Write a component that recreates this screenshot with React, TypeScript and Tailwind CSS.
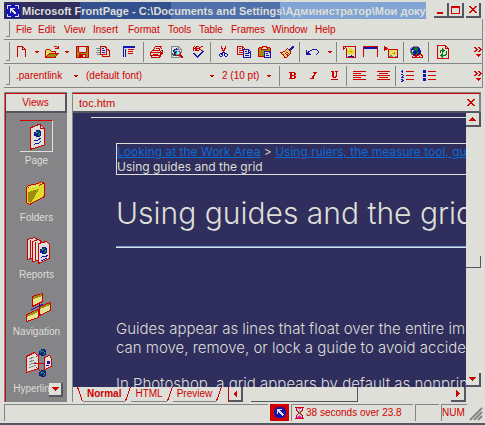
import type { ReactNode } from 'react';

const UI = 'font-["Liberation_Sans","Noto_Sans",sans-serif]';

const PALETTE: Record<string, string> = {
  r: '#d00000',
  b: '#1414b0',
  w: '#dddfd8',
  y: '#dede2a',
  Y: '#e4e490',
  o: '#a08a10',
  g: '#858587',
  n: '#0c7a1c',
  k: '#302e5d',
  c: '#1fd0dc',
  m: '#e020d0',
};

function Sprite({ rows }: { rows: string[] }) {
  const width = Math.max(...rows.map((row) => row.length));
  const cells: ReactNode[] = [];
  rows.forEach((row, y) => {
    let x = 0;
    while (x < row.length) {
      let end = x + 1;
      while (end < row.length && row[end] === row[x]) end++;
      if (PALETTE[row[x]]) {
        cells.push(<rect key={`${x}-${y}`} x={x} y={y} width={end - x} height={1} fill={PALETTE[row[x]]} />);
      }
      x = end;
    }
  });
  return (
    <svg width={width} height={rows.length} viewBox={`0 0 ${width} ${rows.length}`} shapeRendering="crispEdges" className="block shrink-0" aria-hidden="true">
      {cells}
    </svg>
  );
}

const S = {
  app: ['wwww....wwww', 'w..........w', 'w..........w', 'w..wwwww...w', '...www......', '...wwww.....', '...w.www....', '...w..www...', '.......ww...', 'w..........w', 'w..........w', 'wwww....wwww'],
  appSmall: ['...bbbbbb...', '.bbbbbbbbbb.', '.bbwwwwwbbb.', 'bbbwwwbbbbbb', 'bbbwwwwbbbbb', 'bbbwbwwwbbbb', 'bbbwbbwwwbbb', 'bbbbbbbwwwbb', '.bbbbbbbwbb.', '.bbbbbbbbbb.', '...bbbbbb...'],
  arrow: ['rrrr', '.rr.'],
  blank: ['rrrrrr...', 'r....rr..', 'r....r.r.', 'r....rrrr', 'r.......r', 'r.......r', 'r.......r', 'r.......r', 'r.......r', 'r.......r', 'r.......r'],
  open: ['.........rrr.r', '............rr', '..........rrrr', '.rrrr.........', 'rYyYyr........', 'ryYyYyrrrrr...', 'rYyYyYyYyYr...', 'ryYyrrrrrrrrrr', 'rYyroooooooor.', 'ryroooooooor..', 'rroooooooor...', 'rrrrrrrrrrr...'],
  save: ['rrrrrrrrrrrrr', 'ror.......ror', 'ror.......ror', 'ror.......ror', 'ror.......ror', 'ror.......ror', 'roorrrrrrroor', 'rooooooooooor', 'roorrrrrrroor', 'roorrrrwwroor', 'roorrrrwwroor', 'rrrrrrrrrrrrr'],
  publish: ['....rrrrrr....', '....rwwwwrr...', 'ggggrwbbwwr...', '....rwwwwwrrr.', '.gggrwbbbwr.rr', '....rwwwwwr..r', 'ggggrwbbbwr..r', '....rwwwwwr..r', '.gggrrrrrrr..r', '......r......r', '......rrrrrrrr'],
  folders: ['bbbbbbbbbbbb', 'bbbbbbbbbbbb', 'b...........', 'b.b..rrrrrr.', 'b.b.........', 'b.b..rrrrr..', 'b.b.........', 'b.b..rrrrr..', 'b.b.........', 'b.b.........', 'b.b.........'],
  print: ['.....rrrrrrr.', '....r.....r..', '....r.rrrr.r.', '...r.....r...', '..rrrrrrrr.rr', '.r........r.r', 'rrrrrrrrrrrrr', 'r.........rrr', 'r..rrrrr..rr.', 'rrrrrrrrrrr..', '.r.......rr..', '.rrrrrrrrr...'],
  preview: ['gggggggg....', 'gwwwwwwgg...', 'gwwwwbwgwg..', 'gwwbbbbgggg.', 'gwbnwwwwwwg.', 'gwbnnbccrwg.', 'gwwbbcwwcrg.', 'gnwbrcwwcr..', 'gnnbrcccrr..', 'gwnnbrrrrrr.', 'gwwwwwwwgrrr', 'ggggggggg.rr'],
  spell: ['..r.rrr..rr.', '.r.rr..rr...', '.rrrrrrr....', '.r.rr..rr...', '.r.rrrr..rr.', '..........bb', '.........bb.', '.bb.....bb..', '..bb...bb...', '...bb.bb....', '....bbb.....', '.....b......'],
  cut: ['..r...r..', '..r...r..', '..rr.rr..', '...r.r...', '...rrr...', '....r....', '...bbb...', '.bbb.bbb.', 'b.bb.b..b', 'b..b.b..b', '.bb...bb.'],
  copy: ['rrrrrr........', 'r....rr.......', 'r.rr.r.r......', 'r....rbbbbbb..', 'r.rrrrb....bb.', 'r.....b.bb.b.b', 'r.rrrrb....bbb', 'r.....b.bbbb.b', 'rrrrrrb......b', '......b.bbbb.b', '......b......b', '......bbbbbbbb'],
  paste: ['....rrrrr....', '.rrrrywyrrrr.', 'roorwwwwwroor', 'roorrrrrrroor', 'rooooooooooor', 'rooooobbbbbbr', 'rooooobwwwwbb', 'rooooobwbbwwb', 'rooooobwwwwwb', 'rooooobwbbbwb', 'rrrrrrbwwwwwb', '......bbbbbbb'],
  brush: ['............bb', '...........bbb', '.......r..bbb.', '......rYrbbb..', '.....rYyYbr...', '...rrYyYyYr...', 'rrrYyYrrYyr...', '.rYyYr..rYr...', '..rrYyrrYr....', '...rYyYrr.....', '....rYYr......', '.y.yrrr.......'],
  undo: ['......bbbbb..', 'b...bb.....b.', 'b.bb........b', 'bbb.........b', 'bbbb.......b.', 'bbbbb.....b..'],
  web: ['rrrrrrrrrrrrr', 'r.rwwwwwwwwwr', 'rr.rwwyyywwwr', 'r..rwwyyywwwr', '...ryyyyyyywr', '...ryyyooyyyr', '...ryyyyyyywr', '...rwyyyyyywr', '...rwwyywwwwr', '...rwwwwbwwwr', '...rwbbbbbbwr', '...rrrrrrrrrr'],
  table: ['rrrrrrrrrrrrrrr', 'rbbbbbbbbbbbbbr', 'rbbbbbbbbbbbbbr', 'r.............r', 'r.............r', 'r.............r', 'r.............r', 'r.............r', 'r.............r', 'r.............r', 'r.............r'],
  picture: ['r.............', 'rrr...........', 'rrrr..........', 'rrr.rrrrrrrrrr', 'r...ryyYyYYyYr', '....rYyyYyyYyr', '....ryYYyYoYYr', '....rYyYyooyYr', '....ryYyYyYyYr', '....rwggwYwwwr', '....rggggwwggr', '....rrrrrrrrrr'],
  link: ['....ggggg.....', '..ggbbnnbb....', '.ggbbnnnnbb...', '.gbbbnnnnbb...', '.gbwwbnnbbbb..', '.gnwbbbbnbbb..', '.gnnbbbbnnbb..', '..gnnbbnnbbr..', '..ggbbbnbrrrr.', '....rrrrrr..rr', '...r..rr..r..r', '...rrrrrrrrrrr'],
  refresh: ['rrrrrrrrr...', 'r.......rr..', 'r.......r.r.', 'r....n..rrrr', 'r....nn....r', 'r..nnnnn...r', 'r..n.nn..n.r', 'r..n.n...n.r', 'r....n...n.r', 'r...nn..nn.r', 'r..nnnnnn..r', 'r...nn.....r', 'r....n.....r', 'rrrrrrrrrrrr'],
  more: ['rr..rr..', '.rr..rr.', '..rr..rr', '.rr..rr.', 'rr..rr..', '........', '........', '..rrrrr.', '...rrr..', '....r...'],
  bold: ['rrrrrr.', '.rr..rr', '.rr..rr', '.rrrrr.', '.rr..rr', '.rr..rr', 'rrrrrr.'],
  italic: ['...rrrr', '....rr.', '....r..', '...rr..', '..rr...', '..rr...', 'rrrr...'],
  underline: ['rrr.rrr', '.rr..r.', '.rr..r.', '.rr..r.', '.rr..r.', '.rr.rr.', '..rrr..', '.......', 'rrrrrrr'],
  left: ['rrrrrrrrrrrrr', '.............', 'rrrrrrrr.....', '.............', 'rrrrrrrrrrrrr', '.............', 'rrrrrrrr.....', '.............', 'rrrrrrrrrrrrr'],
  center: ['rrrrrrrrrrrrr', '.............', '..rrrrrrrrr..', '.............', 'rrrrrrrrrrrrr', '.............', '..rrrrrrrrr..', '.............', 'rrrrrrrrrrrrr'],
  numbers: ['.b...........', 'bb...rrrrrrrr', '.b...........', '.............', 'bb...........', '..b..rrrrrrrr', '.b...........', 'bbb..........', '.............', 'bb...rrrrrrrr', '.bb..........', 'bb...........'],
  bullets: ['bbb..........', 'bbb..rrrrrrrr', 'bbb..........', '.............', 'bbb..........', 'bbb..rrrrrrrr', 'bbb..........', '.............', 'bbb..........', 'bbb..rrrrrrrr', 'bbb..........'],
  min: ['.......', '.......', '.......', '.......', '.......', '.......', 'rrrrrr.', 'rrrrrr.'],
  max: ['rrrrrrrrr', 'rrrrrrrrr', 'r.......r', 'r.......r', 'r.......r', 'r.......r', 'r.......r', 'rrrrrrrrr'],
  close: ['rr....rr', '.rr..rr.', '..rrrr..', '...rr...', '..rrrr..', '.rr..rr.', 'rr....rr'],
  up: ['...r...', '..rrr..', '.rrrrr.', 'rrrrrrr'],
  down: ['rrrrrrr', '.rrrrr.', '..rrr..', '...r...'],
  prev: ['..r', '.rr', 'rrr', 'rrr', '.rr', '..r'],
  next: ['r...', 'rr..', 'rrr.', 'rrrr', 'rrr.', 'rr..', 'r...'],
  glass: ['rrrrrrrrr', '.rwmmmwr.', '.rwwwwwr.', '.rgwgwgr.', '..rgwgr..', '...rgr...', '...rgr...', '..rwwgr..', '.rwwgwgr.', '.rwmmmwr.', '.rmmmmmr.', 'rrrrrrrrr'],
};

type Tool = { label: string; rows: string[]; size: string; line?: boolean };

const TOOLS: Tool[] = [
  { label: 'New page', rows: S.blank, size: 'w-[19px]' },
  { label: 'New page options', rows: S.arrow, size: 'w-[12px]' },
  { label: 'Open', rows: S.open, size: 'w-[18px]' },
  { label: 'Open options', rows: S.arrow, size: 'w-[12px]' },
  { label: 'Save', rows: S.save, size: 'w-[18px]' },
  { label: 'Publish web', rows: S.publish, size: 'w-[24px]' },
  { label: 'Folder list', rows: S.folders, size: 'w-[28px]', line: true },
  { label: 'Print', rows: S.print, size: 'w-[24px]' },
  { label: 'Preview in browser', rows: S.preview, size: 'w-[18px]' },
  { label: 'Spelling', rows: S.spell, size: 'w-[24px]', line: true },
  { label: 'Cut', rows: S.cut, size: 'w-[24px]' },
  { label: 'Copy', rows: S.copy, size: 'w-[18px]' },
  { label: 'Paste', rows: S.paste, size: 'w-[22px]' },
  { label: 'Format painter', rows: S.brush, size: 'w-[24px]', line: true },
  { label: 'Undo', rows: S.undo, size: 'w-[24px]' },
  { label: 'Undo options', rows: S.arrow, size: 'w-[12px]', line: true },
  { label: 'Web component', rows: S.web, size: 'w-[24px]' },
  { label: 'Insert table', rows: S.table, size: 'w-[18px]' },
  { label: 'Insert picture', rows: S.picture, size: 'w-[24px]', line: true },
  { label: 'Hyperlink', rows: S.link, size: 'w-[24px]', line: true },
  { label: 'Refresh', rows: S.refresh, size: 'w-[28px]' },
];

const FORMATS: Tool[] = [
  { label: 'Bold', rows: S.bold, size: 'w-[24px]' },
  { label: 'Italic', rows: S.italic, size: 'w-[18px]' },
  { label: 'Underline', rows: S.underline, size: 'w-[24px]', line: true },
  { label: 'Align left', rows: S.left, size: 'w-[24px]' },
  { label: 'Center', rows: S.center, size: 'w-[24px]', line: true },
  { label: 'Numbering', rows: S.numbers, size: 'w-[22px]' },
  { label: 'Bullets', rows: S.bullets, size: 'w-[22px]' },
];

const MENU = [
  ['File', 'w-[22px]'],
  ['Edit', 'w-[26px]'],
  ['View', 'w-[29px]'],
  ['Insert', 'w-[35px]'],
  ['Format', 'w-[40px]'],
  ['Tools', 'w-[31px]'],
  ['Table', 'w-[32px]'],
  ['Frames', 'w-[41px]'],
  ['Window', 'w-[43px]'],
  ['Help', 'w-[24px]'],
];

function Grip() {
  return <div className="mx-0.5 my-0.5 w-1 shrink-0 self-stretch border-r border-b border-[#858587]" />;
}

function ToolButton({ tool }: { tool: Tool }) {
  return (
    <>
      <button type="button" aria-label={tool.label} className={`flex h-5 shrink-0 items-center justify-center ${tool.size}`}>
        <Sprite rows={tool.rows} />
      </button>
      {tool.line && <div className="h-5 w-px shrink-0 bg-[#858587]" />}
    </>
  );
}

function Combo({ label, value, size }: { label: string; value: string; size: string }) {
  return (
    <div className={`grid shrink-0 items-center ${size}`}>
      <select aria-label={label} className="col-start-1 row-start-1 w-full appearance-none bg-transparent pl-1 outline-none">
        <option>{value}</option>
      </select>
      <span className="pointer-events-none col-start-1 row-start-1 mr-1 justify-self-end">
        <Sprite rows={S.arrow} />
      </span>
    </div>
  );
}

function Bevel({ label, rows, size }: { label: string; rows: string[]; size: string }) {
  return (
    <button type="button" aria-label={label} className={`flex shrink-0 items-center justify-center border-r-2 border-b-2 border-[#55565f] bg-[#dddfd8] ${size}`}>
      <Sprite rows={rows} />
    </button>
  );
}

function Globe({ x, y }: { x: number; y: number }) {
  return (
    <g transform={`translate(${x} ${y})`}>
      <path fill="#1414a0" d="M2 0h4v1h1v5h-1v1h-4v-1h-2v-4h2z" />
      <path fill="#0c7a1c" d="M3 1h2v2h-2zM1 3h2v1h-2zM4 4h2v2h-2z" />
      <path fill="#1fb0dc" d="M2 2h1v1h-1zM5 3h1v1h-1z" />
    </g>
  );
}

const pageArt = (
  <>
    <path d="M10 8L20 4L24 8V25L10 29.5Z" fill="#dddfd8" stroke="#d00000" />
    <path d="M20 4V8H24" fill="none" stroke="#d00000" />
    <Globe x={14} y={10} />
    <path d="M14 21L16 20L18 20L21 18M14 25L16 23L18 24L21 21" fill="none" stroke="#1414b0" />
  </>
);

const folderArt = (
  <>
    <path d="M5.500 10.500L7.500 8.500L17.500 6.500L20.500 4.500L23.500 6.500V19.500L8.500 27.500L5.500 25.500Z" fill="#dede2a" stroke="#d00000" />
    <path d="M7 15L18 12L10 26L7 25Z" fill="#a08a10" />
    <path d="M7 11L19 8L23 6" fill="none" stroke="#d00000" />
    <path d="M8 10.500L18 8.500" stroke="#e4e490" />
  </>
);

const reportsArt = (
  <>
    <path d="M6.500 5.500L13.500 3.500L17.500 6.500V22.500L6.500 25.500Z" fill="#dddfd8" stroke="#d00000" />
    <path d="M11.500 7.500L17.500 5.500L21.500 8.500V25.500L11.500 27.500Z" fill="#dddfd8" stroke="#d00000" />
    <path d="M14.500 8V27M9.500 6V25" stroke="#d00000" />
    <path d="M17.500 9.500L25.500 7.500L28.500 10.500V24.500L17.500 29.500Z" fill="#dddfd8" stroke="#d00000" />
    <Globe x={19} y={13} />
    <path d="M20 24L22 22L24 23L27 21M20 27L26 24" fill="none" stroke="#1414b0" />
  </>
);

const navArt = (
  <>
    <path d="M10 19L22 13M18 12V19" stroke="#1414b0" />
    <path d="M11.500 5.500L21.500 2.500V10.500L11.500 15.500Z" fill="#e4e490" stroke="#d00000" />
    <path d="M18.500 15.500L29.500 11.500V19.500L18.500 24.500Z" fill="#e4e490" stroke="#d00000" />
    <path d="M5.500 23.500L17.500 18.500V26.500L5.500 30.500Z" fill="#e4e490" stroke="#d00000" />
    <path d="M12 7L21 4M19 17L29 13M6 25L17 20" stroke="#a08a10" strokeWidth="2" />
  </>
);

const hyperArt = (
  <>
    <path d="M5.500 8.500L13.500 4.500L17.500 8.500V20.500L5.500 24.500Z" fill="#dddfd8" stroke="#d00000" />
    <path d="M8 11L13 9M8 14L13 12M8 17L15 14M8 20L15 17" stroke="#858587" />
    <path d="M23.500 9.500L28.500 7.500L30.500 10.500V18.500L23.500 21.500Z" fill="#dddfd8" stroke="#d00000" />
    <path d="M13 15.500H23M15 9L20 5M15 19L20 24" stroke="#d00000" />
    <path d="M26 13h3v3h-3zM25 17h3v1h-3z" fill="#1414b0" />
    <Globe x={18} y={1} />
    <Globe x={18} y={22} />
  </>
);

const VIEWS = [
  { name: 'Page', art: pageArt, on: true },
  { name: 'Folders', art: folderArt },
  { name: 'Reports', art: reportsArt },
  { name: 'Navigation', art: navArt },
  { name: 'Hyperlinks', art: hyperArt },
];

function ViewsPanel() {
  return (
    <aside className="flex w-[63px] shrink-0 flex-col border-t border-l border-[#858587]">
      <h2 className="flex h-5 shrink-0 items-center justify-center border-t border-l border-r-2 border-b-2 border-t-[#d00000] border-l-[#d00000] border-r-[#55565f] border-b-[#55565f]">Views</h2>
      <nav className="relative min-h-0 flex-1 overflow-hidden border-l border-[#d00000] bg-[#858587] text-[#dddfd8]">
        <ul className="flex flex-col gap-[7px] pt-[7px]">
          {VIEWS.map((view) => (
            <li key={view.name}>
              <button type="button" className="flex w-full flex-col items-center">
                <span className={view.on ? 'border-t border-r border-b border-t-[#d00000] border-r-[#dddfd8] border-b-[#dddfd8]' : 'border border-transparent'}>
                  <svg width="32" height="30" viewBox="0 1 32 30" shapeRendering="crispEdges" className="block" aria-hidden="true">
                    {view.art}
                  </svg>
                </span>
                <span className="leading-[18px]">{view.name}</span>
              </button>
            </li>
          ))}
        </ul>
        <div className="absolute right-[4px] bottom-[5px]">
          <Bevel label="Scroll views down" rows={S.down} size="h-[14px] w-[14px]" />
        </div>
      </nav>
    </aside>
  );
}

function Tab({ name, active }: { name: string; active?: boolean }) {
  return (
    <button type="button" role="tab" aria-selected={!!active} className="flex h-full shrink-0 items-stretch">
      {active && (
        <svg width="6" height="15" viewBox="0 0 6 15" shapeRendering="crispEdges" aria-hidden="true">
          <path d="M0.500 0L5.500 14" stroke="#d00000" />
        </svg>
      )}
      <span className={`flex items-center border-b border-[#858587] px-1 ${active ? 'font-bold' : ''}`}>{name}</span>
      <svg width="6" height="15" viewBox="0 0 6 15" shapeRendering="crispEdges" aria-hidden="true">
        <path d="M5.500 0L0.500 14" stroke="#d00000" />
      </svg>
    </button>
  );
}

function Editor() {
  return (
    <main className="flex min-w-0 flex-1 flex-col border-t border-l border-[#858587]">
      <div className="flex h-5 shrink-0 items-center justify-between border-t border-r-2 border-b-2 border-t-[#d00000] border-r-[#858587] border-b-[#55565f] pr-1 pl-1.5">
        <span className="text-[11px]">toc.htm</span>
        <button type="button" aria-label="Close page">
          <Sprite rows={S.close} />
        </button>
      </div>
      <div className="flex min-h-0 flex-1">
        <article className='min-w-0 flex-1 overflow-hidden bg-[#302e5d] pt-1 pl-[18px] font-["Inter","Noto_Sans",sans-serif] text-[15px] leading-[19px] font-light whitespace-nowrap text-[#dddfd8]'>
          <div className="border-t border-[#dddfd8] pt-[25px] pl-[25px]">
            <p className="border-y border-l border-[#dddfd8] text-[12px] leading-[15px] font-normal">
              <a href="#work-area" className="text-[#0b6ad4] underline">Looking at the Work Area</a>
              {' > '}
              <a href="#rulers" className="text-[#0b6ad4] underline">Using rulers, the measure tool, guides</a>
              <br />
              Using guides and the grid
            </p>
            <h1 className="mt-5 text-[30px] leading-[36px] font-light">Using guides and the grid</h1>
            <hr className="mt-[15px] h-0.5 border-t border-b border-t-[#6fa3dd] border-b-[#dddfd8]" />
            <p className="mt-[71px]">
              Guides appear as lines that float over the entire im
              <br />
              can move, remove, or lock a guide to avoid accide
            </p>
            <p className="mt-[17px]">In Photoshop, a grid appears by default as nonprin</p>
          </div>
        </article>
        <div className="flex w-[15px] shrink-0 flex-col">
          <Bevel label="Scroll up" rows={S.up} size="h-[14px] w-[15px]" />
          <div className="mt-[129px] h-3 border-r border-b border-[#55565f]" />
          <div className="mt-auto">
            <Bevel label="Scroll down" rows={S.down} size="h-[14px] w-[15px]" />
          </div>
        </div>
      </div>
      <div className="flex h-[15px] shrink-0 pr-[15px]">
        <div role="tablist" className="flex pl-1">
          <Tab name="Normal" active />
          <Tab name="HTML" />
          <Tab name="Preview" />
        </div>
        <div className="ml-1.5 flex min-w-0 flex-1 border-l border-[#d00000]">
          <Bevel label="Scroll left" rows={S.prev} size="h-[15px] w-[14px]" />
          <div className="ml-2 h-[15px] w-[45%] border-r border-b border-[#55565f]" />
          <div className="ml-auto">
            <Bevel label="Scroll right" rows={S.next} size="h-[15px] w-[15px]" />
          </div>
        </div>
      </div>
    </main>
  );
}

export default function App() {
  return (
    <div className={`flex h-screen min-h-[425px] flex-col overflow-hidden border-b-2 border-[#55565f] bg-[#dddfd8] pt-0.5 pl-1 text-[10px] leading-[14px] text-[#d00000] ${UI}`}>
      <header className="flex h-[17px] shrink-0 items-center justify-between pr-1">
        <h1 className="flex h-full items-center gap-0.5 overflow-hidden bg-[linear-gradient(90deg,#302e5d_0_76px,#33508f_76px_167px,#4f70aa_167px_276px,#80a4d3_276px)] pl-0.5 text-[11px] font-bold whitespace-nowrap text-[#dddfd8]">
          <span className="bg-[#1414b0] p-px">
            <Sprite rows={S.app} />
          </span>
          Microsoft FrontPage - C:\Documents and Settings\Администратор\Мои доку
        </h1>
        <div className="flex">
          <Bevel label="Minimize" rows={S.min} size="h-[15px] w-[15px]" />
          <Bevel label="Maximize" rows={S.max} size="h-[15px] w-[15px]" />
          <div className="w-0.5" />
          <Bevel label="Close" rows={S.close} size="h-[15px] w-[15px]" />
        </div>
      </header>

      <div className="mr-0.5 shrink-0 border-r border-[#858587]">
        <nav className="flex h-[21px] items-center border-b border-[#858587]" aria-label="Menu">
          <Grip />
          <div className="flex pt-0.5 pl-1">
            {MENU.map(([name, size]) => (
              <button key={name} type="button" className={`shrink-0 text-left ${size}`}>
                {name}
              </button>
            ))}
          </div>
        </nav>
        <div className="flex h-6 items-center border-b border-[#858587]">
          <Grip />
          {TOOLS.map((tool) => (
            <ToolButton key={tool.label} tool={tool} />
          ))}
          <button type="button" aria-label="More buttons" className="ml-auto">
            <Sprite rows={S.more} />
          </button>
        </div>
        <div className="flex h-6 items-center border-b border-[#858587]">
          <Grip />
          <Combo label="Style" value=".parentlink" size="w-[70px]" />
          <Combo label="Font" value="(default font)" size="w-[136px]" />
          <Combo label="Font size" value="2 (10 pt)" size="w-[57px]" />
          <div className="ml-1 h-5 w-px bg-[#858587]" />
          {FORMATS.map((tool) => (
            <ToolButton key={tool.label} tool={tool} />
          ))}
          <button type="button" aria-label="More formatting" className="ml-auto">
            <Sprite rows={S.more} />
          </button>
        </div>
      </div>

      <div className="mt-1 mr-1 flex min-h-0 flex-1 gap-[5px]">
        <ViewsPanel />
        <Editor />
      </div>

      <footer className="mt-0.5 flex h-[17px] shrink-0 gap-0.5 pr-0.5">
        <div className="flex-1 border-t border-l border-[#858587]" />
        <div className="flex w-[19px] items-center justify-center bg-[#d00000]">
          <Sprite rows={S.appSmall} />
        </div>
        <div className="flex w-[122px] items-center gap-0.5 border-t border-l border-[#858587] pl-[3px] whitespace-nowrap">
          <Sprite rows={S.glass} />
          38 seconds over 23.8
        </div>
        <div className="w-6 border-t border-l border-[#858587]" />
        <div className="flex w-[26px] items-center border-t border-l border-[#858587]">NUM</div>
        <svg width="14" height="14" viewBox="0 0 14 14" className="self-end" aria-hidden="true">
          <path d="M1 13L13 1M5 13L13 5M9 13L13 9" stroke="#858587" strokeWidth="2" />
        </svg>
      </footer>
      <div className="h-0.5 shrink-0" />
    </div>
  );
}
